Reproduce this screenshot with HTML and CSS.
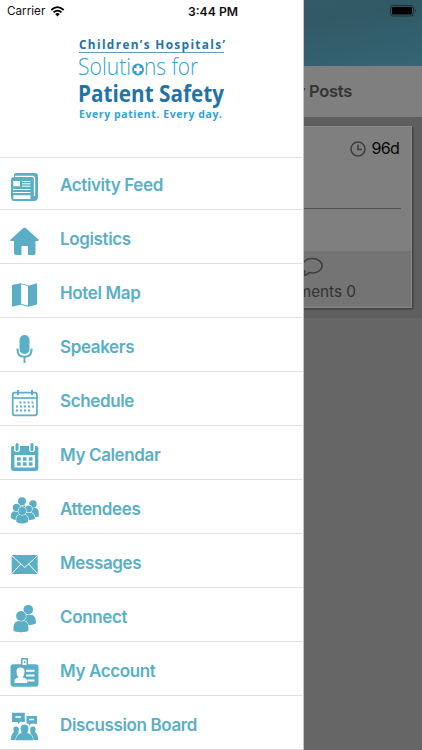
FILE: index.html
```html
<!DOCTYPE html>
<html lang="en">
<head>
<meta charset="utf-8">
<title>Patient Safety</title>
<link rel="stylesheet" href="styles.css">
</head>
<body>
<div class="app">
  <main class="page">
    <div class="navbar"></div>
    <div class="tabs"><span>My Posts</span></div>
    <div class="feed">
      <article class="card">
        <div class="card-time">
          <svg width="16" height="16" viewBox="0 0 16 16"><circle cx="8" cy="8" r="7"/><path d="M8 3.5V8.5H12"/></svg>
          <span>96d</span>
        </div>
        <div class="card-body"></div>
        <div class="card-actions">
          <svg width="24" height="20" viewBox="0 0 24 20"><path d="M5 14.500C-1 9 4 1.500 12 1.500C18 1.500 22 4.500 22 8.700C22 14 15.500 17 9 15.500C7.500 17.500 5.500 18.500 3.500 18.500C4.500 17.500 5 16 5 14.500Z"/></svg>
          <span>Comments 0</span>
        </div>
      </article>
    </div>
  </main>

  <aside class="drawer">
    <header class="brand">
      <svg class="logo" width="170" height="90" viewBox="0 0 170 90">
        <text class="navy semi" x="4" y="12.500" font-size="11.800" textLength="146" lengthAdjust="spacing">Children’s Hospitals’</text>
        <path class="rule" d="M4 16.500H149"/>
        <text class="sky light" x="3" y="39" font-size="23" textLength="53" lengthAdjust="spacingAndGlyphs">Soluti</text>
        <circle class="dot" cx="63" cy="33.500" r="5.900"/>
        <path class="plus" d="M63 29.500V37.500M59 33.500H67"/>
        <text class="sky light" x="69" y="39" font-size="23" textLength="54" lengthAdjust="spacingAndGlyphs">ns for</text>
        <text class="navy bold" x="3" y="65.500" font-size="23.500" textLength="146" lengthAdjust="spacingAndGlyphs">Patient Safety</text>
        <text class="sky semi" x="4" y="81.500" font-size="10.500" textLength="143">Every patient. Every day.</text>
      </svg>
    </header>
    <nav class="menu">
      <a class="item"><svg viewBox="0 0 30 30"><path d="M6 1H25Q28 1 28 4V25Q28 29 24 29H4Q1 29 1 25V8Q1 5 4 5V3Q4 1 6 1Z"/><path class="cut-line thin" d="M5 4.300H22Q24.500 4.300 24.500 7V24"/><path class="cut" d="M3.300 9H10V14.300H3.300ZM3.300 23.300H20.500V27H3.300Z"/><path class="cut-line hair" d="M12 9.500H20.500M12 11.800H20.500M12 14.200H20.500M3 17.500H20.500M3 20.500H20.500"/></svg><span>Activity Feed</span></a>
      <a class="item"><svg viewBox="0 0 30 30"><path d="M14.500 1.500Q15.300 1.500 16 2.200L28.500 13.500Q29.500 15 27.500 15H25.500V27Q25.500 29 23.500 29H18V20H11.500V29H6Q4 29 4 27V15H1.500Q-.5 15 .7 13.500L13 2.200Q13.700 1.500 14.500 1.500Z"/></svg><span>Logistics</span></a>
      <a class="item"><svg viewBox="0 0 30 30"><path d="M2 5L10.500 3.300L19 5.500L27 3.300V24.500L18.500 26.700L10.500 24.700L2 26.700Z"/><path class="cut" d="M11.200 4.300L18 6V25.600L11.200 24Z"/></svg><span>Hotel Map</span></a>
      <a class="item"><svg viewBox="0 0 30 30"><rect x="9.500" y="1" width="10" height="19" rx="5"/><path class="stroke" d="M7.500 14.500V16Q7.500 22.800 14.500 22.800T21.500 16V14.500M14.500 23V29"/></svg><span>Speakers</span></a>
      <a class="item"><svg viewBox="0 0 30 30"><rect class="stroke fine" x="2.700" y="4.700" width="24.300" height="22.600" rx="2"/><path class="stroke fine" d="M2.500 10H27"/><path class="stroke" d="M8 2V7M22 2V7"/><path class="stroke dots" d="M9.500 14.500H25M6 18.500H25M6 22.500H21"/></svg><span>Schedule</span></a>
      <a class="item"><svg viewBox="0 0 30 30"><path d="M3 4H26Q28.300 4 28.300 7V26Q28.300 29 25.500 29H4Q1 29 1 26V7Q1 4 3 4Z"/><path class="cut" d="M4 2.500H10V7.500Q10 10 7 10T4 7.500ZM19 2.500H25V7.500Q25 10 22 10T19 7.500ZM4.500 13H25V25.500H4.500Z"/><rect x="5.500" y="1" width="3" height="8" rx="1.500"/><rect x="20.500" y="1" width="3" height="8" rx="1.500"/><path class="stroke squares" d="M7 17H22.500M7 22H22.500"/></svg><span>My Calendar</span></a>
      <a class="item"><svg viewBox="0 0 30 30"><g class="outlined"><path d="M6 20V15Q6 9 12 9T18 15V20Z"/><circle cx="12" cy="5.200" r="4"/><path d="M16 21V16Q17 11.500 23 11.500T28.700 17V20.500Q25 22 16 21Z"/><circle cx="23" cy="8" r="3.700"/><path d="M.8 22V20Q.8 15 6 15T11 21V24Q5 25 .8 22Z"/><circle cx="6.500" cy="11.500" r="3.700"/><path d="M14 23V21Q14 16.500 19 16.500T24.800 21V23Q20 25 14 23Z"/><circle cx="18.500" cy="13" r="3.500"/><path d="M6.300 26V22.500Q6.300 18.500 12 18.500T18 22.500V26Q12 29 6.300 26Z"/><circle cx="12.200" cy="15" r="3.900"/></g></svg><span>Attendees</span></a>
      <a class="item"><svg viewBox="0 0 30 30"><rect x="1.700" y="5" width="26" height="19" rx="1"/><path class="cut-line hair" d="M2 5.800L14.700 17.500L27.500 5.800M2 23.500L10.800 14M27.500 23.500L18.600 14"/></svg><span>Messages</span></a>
      <a class="item"><svg viewBox="0 0 30 30"><g class="outlined"><path d="M11 21V17Q11 10.500 18 10.500H20Q25.800 11 25.800 17V19.500Q22 22 11 21Z"/><circle cx="18.300" cy="5.700" r="4.800"/><path d="M3.500 26.500V23Q3.500 16.500 11 16.500T18.400 23V26.500Q17.500 28.200 11 28.200T3.500 26.500Z"/><circle cx="11" cy="12" r="4.900"/></g></svg><span>Connect</span></a>
      <a class="item"><svg viewBox="0 0 30 30"><rect x=".5" y="6.300" width="28" height="22.500" rx="3"/><path d="M11 0H18V8.500H11Z"/><path class="cut" d="M12.500 1.500H16.500V7H12.500ZM4.500 25V23Q4.500 20.500 8.500 19.500Q6.500 17 6.500 13.500Q6.500 9.500 10.500 9.500T14.500 13.500Q14.500 17 12.500 19.500Q17.300 20.500 17.300 23V25Z"/><path d="M14 3H15.200V5H14Z"/><path class="cut-line" d="M16 12.800H24.500M16 17.500H24.500M17.500 22.500H24.500"/></svg><span>My Account</span></a>
      <a class="item"><svg viewBox="0 0 30 30"><path d="M2 .8H14.800V10H10L8 12.500V10H2ZM16.500 4H27V11.800H21L19 14V11.800H16.500Z"/><path class="cut-line thin" d="M5.500 5H11M19 7.500H24"/><g class="outlined"><path d="M.7 28Q1 22 4 20Q2 14.500 6 14.500T8.500 20V28ZM28.300 28Q28 22 25 20Q27 14.500 23 14.500T20.500 20V28Z"/><path d="M6 28.200Q6 22.500 11.500 21Q8.500 12.500 14.500 12.500T17.500 21Q23 22.500 23 28.200Z"/></g></svg><span>Discussion Board</span></a>
    </nav>
  </aside>

  <div class="status">
    <span class="carrier">Carrier
      <svg width="15" height="11" viewBox="0 0 14 11"><path class="wave" d="M.8 4Q7-1.800 13.200 4M3 6.400Q7 2.800 11 6.400"/><path d="M4.700 8Q7 6.200 9.300 8L7 10.500Z"/></svg>
    </span>
    <span class="clock">3:44 PM</span>
    <svg class="battery" width="27" height="12" viewBox="0 0 27 12"><rect class="shell" x=".5" y=".5" width="23" height="10.500" rx="2.500"/><rect x="2" y="2" width="20" height="7.500" rx="1"/><path class="cap" d="M25 4Q27 5.700 25 7.500Z"/></svg>
  </div>
</div>
</body>
</html>
```
FILE: styles.css
```css
* { box-sizing: border-box; }

body {
  margin: 0;
  font-family: Inter, "Liberation Sans", sans-serif;
}

.app {
  position: relative;
  width: 422px;
  height: 750px;
  overflow: hidden;
  background: #666;
}

.navbar {
  height: 66px;
  background: linear-gradient(170deg, #355e6a 20%, #315965 55%, #356575);
}

.tabs {
  display: flex;
  align-items: center;
  justify-content: flex-end;
  height: 51px;
  padding: 0 70px 2px 0;
  background: #7f7f7f;
  color: #333;
  font-size: 16.5px;
  font-weight: 600;
  letter-spacing: -0.3px;
}

.feed {
  height: 201px;
  padding: 9px 10px 0 8px;
  background: #5f5f5f;
}

.card {
  display: flex;
  flex-direction: column;
  height: 182px;
  background: #7f7f7f;
  border: 1px solid #8a8a8a;
  border-width: 1px 1px 1px 0;
  box-shadow: 1px 1px 2px #333;
}

.card-time {
  display: flex;
  align-items: center;
  justify-content: flex-end;
  gap: 5px;
  height: 43px;
  padding: 0 12px 2px 0;
  font-size: 16px;
  letter-spacing: -0.7px;
  color: #060606;
}

.card-time svg, .card-actions svg {
  fill: none;
  stroke: #3e3e3e;
  stroke-width: 1.5;
}

.card-time svg { margin-top: 2px; }

.card-body {
  height: 39px;
  margin-right: 10px;
  border-bottom: 1px solid #505050;
}

.card-actions {
  display: flex;
  flex-direction: column;
  align-items: flex-end;
  gap: 5px;
  height: 56px;
  margin-top: auto;
  padding: 6px 55px 0 0;
  background: #747474;
  color: #323232;
  font-size: 15.3px;
}

.card-actions svg {
  flex-shrink: 0;
  margin-right: 32px;
}

.drawer {
  position: absolute;
  top: 0;
  left: 0;
  width: 304px;
  height: 750px;
  overflow: hidden;
  background: #fff;
  border-right: 1px solid #c4c4c4;
}

.brand {
  height: 158px;
  padding: 36px 0 0 75px;
  border-bottom: 1px solid #e0e0e0;
}

.logo {
  display: block;
  overflow: visible;
  font-family: "Open Sans", "Noto Sans", sans-serif;
}

.logo .navy { fill: #2273a9; }
.logo .sky { fill: #32a4d4; }
.logo .light { font-weight: 300; }
.logo .semi { font-weight: 700; }
.logo .bold { font-weight: 700; }
.logo .rule { stroke: #5f9cc2; stroke-width: 1; }
.logo .dot { fill: #2a9fd2; }
.logo .plus { stroke: #fff; stroke-width: 3; }

.menu { margin-top: -2px; }

.item {
  display: flex;
  align-items: center;
  gap: 20px;
  height: 54px;
  padding: 8px 0 0 10px;
  border-bottom: 1px solid #e0e0e0;
  color: #5aafc7;
  font-size: 17px;
  font-weight: 600;
  letter-spacing: -0.37px;
}

.item svg {
  width: 30px;
  height: 30px;
  fill: #5aafc7;
}

.item span { margin-top: -4px; }

.item .cut { fill: #fff; }

.item .cut-line {
  fill: none;
  stroke: #fff;
  stroke-width: 2;
}

.item .thin { stroke-width: 1.3; }
.item .hair { stroke-width: 1; }

.item .stroke {
  fill: none;
  stroke: #5aafc7;
  stroke-width: 2;
}

.item .fine { stroke-width: 1.7; }

.item .dots {
  stroke-width: 2;
  stroke-dasharray: 2 2;
}

.item .squares {
  stroke-width: 3.5;
  stroke-dasharray: 3.7 2.2;
}

.item .outlined {
  stroke: #fff;
  stroke-width: 1.1;
  paint-order: stroke;
}

.status {
  position: absolute;
  top: 0;
  left: 0;
  display: grid;
  grid-template-columns: 1fr auto 1fr;
  align-items: center;
  width: 422px;
  height: 22px;
  padding: 0 5px 0 7px;
  color: #111;
  font-size: 11.7px;
}

.carrier {
  display: flex;
  align-items: center;
  gap: 5px;
}

.carrier .wave {
  fill: none;
  stroke: #000;
  stroke-width: 1.8;
}

.clock {
  padding-left: 2px;
  font-size: 12.2px;
  font-weight: 600;
}

.battery {
  justify-self: end;
}

.battery .shell {
  fill: none;
  stroke: #1b3036;
}

.battery .cap { fill: #1b3036; }
```
